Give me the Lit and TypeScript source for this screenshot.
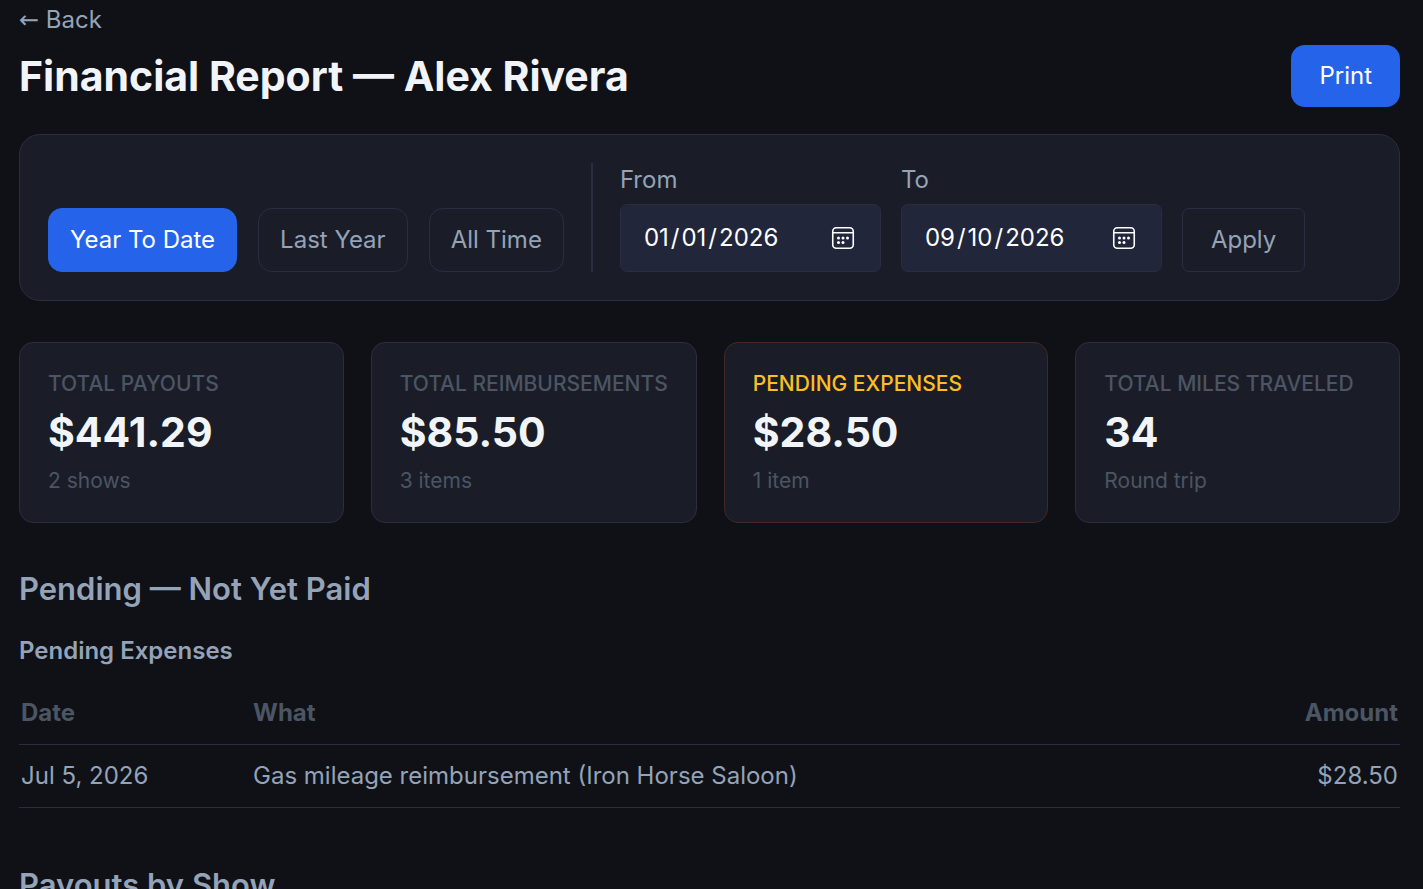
import { LitElement, html, css } from "lit";
import { customElement, property, state } from "lit/decorators.js";

interface Expense {
  date: string;
  what: string;
  amount: string;
}

@customElement("stat-card")
export class StatCard extends LitElement {
  @property() label = "";
  @property() value = "";
  @property() note = "";

  static styles = css`
    :host {
      display: block;
      box-sizing: border-box;
      padding: 28px;
      border: 1px solid #2a2d42;
      border-radius: 14px;
      background: #1a1d27;
    }
    :host([pending]) {
      border-color: #43281f;
    }
    .label,
    .note {
      margin: 0;
      font-size: 21px;
      line-height: 26px;
      color: #4b5563;
    }
    .label {
      font-weight: 500;
      text-transform: uppercase;
      white-space: nowrap;
    }
    :host([pending]) .label {
      color: #fbbf24;
    }
    .value {
      margin: 10px 0 11px;
      font-size: 41px;
      font-weight: 700;
      line-height: 50px;
      color: #f1f5f9;
    }
  `;

  render() {
    return html`
      <p class="label">${this.label}</p>
      <p class="value">${this.value}</p>
      <p class="note">${this.note}</p>
    `;
  }
}

@customElement("app-root")
export class AppRoot extends LitElement {
  @state() private range = "Year To Date";

  private ranges = ["Year To Date", "Last Year", "All Time"];

  private expenses: Expense[] = [
    { date: "Jul 5, 2026", what: "Gas mileage reimbursement (Iron Horse Saloon)", amount: "$28.50" },
  ];

  static styles = css`
    :host {
      display: block;
      box-sizing: border-box;
      min-height: 100vh;
      padding: 4px 23px 0 19px;
      background: #0f1117;
      color: #94a3b8;
      font-family: Inter, sans-serif;
      font-size: 24px;
      line-height: 32px;
    }
    button,
    input {
      box-sizing: border-box;
      margin: 0;
      font: inherit;
    }
    button {
      cursor: pointer;
    }
    .back {
      display: block;
      width: fit-content;
      height: 32px;
      color: inherit;
      text-decoration: none;
    }
    .arrow {
      font-family: "DejaVu Sans", sans-serif;
      line-height: 24px;
    }
    .head {
      display: flex;
      align-items: center;
      justify-content: space-between;
      margin: 9px 0 27px;
    }
    h1,
    h2,
    h3 {
      margin: 0;
    }
    h1 {
      font-size: 41px;
      font-weight: 700;
      line-height: 52px;
      color: #f1f5f9;
    }
    .print {
      padding: 15px 28px;
      border: 0;
      border-radius: 14px;
      background: #2563eb;
      color: #fff;
    }
    .filters {
      display: flex;
      flex-wrap: wrap;
      align-items: flex-end;
      gap: 20px;
      padding: 28px;
      border: 1px solid #2a2d42;
      border-radius: 21px;
      background: #1a1d27;
    }
    .ranges {
      display: flex;
      gap: 21px;
    }
    .range,
    .apply {
      padding: 15px 21px;
      border: 1px solid #2a2d42;
      border-radius: 14px;
      background: transparent;
      color: #94a3b8;
    }
    .range.active {
      border-color: #2563eb;
      background: #2563eb;
      color: #fff;
    }
    .apply {
      padding: 15px 28px;
      border-radius: 7px;
    }
    .divider {
      align-self: stretch;
      width: 2px;
      margin: 0 7px;
      background: #2a2d42;
    }
    .field {
      display: flex;
      flex-direction: column;
      gap: 7px;
      line-height: 34px;
    }
    .date {
      width: 261px;
      height: 68px;
      padding: 0 25px 0 22px;
      border: 1px solid #2a2d42;
      border-radius: 7px;
      background: #21263a;
      color: #fff;
      color-scheme: dark;
    }
    .date::-webkit-datetime-edit,
    .date::-webkit-datetime-edit-fields-wrapper {
      padding: 0;
    }
    .date::-webkit-datetime-edit-text {
      padding: 0 1px;
    }
    .date::-webkit-calendar-picker-indicator {
      width: 24px;
      height: 24px;
      margin: 0;
      padding: 0;
      background: url("data:image/svg+xml,%3Csvg xmlns='http://www.w3.org/2000/svg' viewBox='0 0 24 24' fill='%23fff'%3E%3Crect x='1.75' y='1.75' width='20.5' height='20.5' rx='3.5' fill='none' stroke='%23fff' stroke-width='1.6'/%3E%3Cpath d='M2 6h20v1.6H2z'/%3E%3Ccircle cx='7.5' cy='12' r='1.5'/%3E%3Ccircle cx='12' cy='12' r='1.5'/%3E%3Ccircle cx='16.5' cy='12' r='1.5'/%3E%3Ccircle cx='7.5' cy='16.5' r='1.5'/%3E%3Ccircle cx='12' cy='16.5' r='1.5'/%3E%3C/svg%3E")
        center / 24px 24px no-repeat;
    }
    .stats {
      display: grid;
      grid-template-columns: repeat(4, 1fr);
      gap: 27px;
      margin: 41px 0 46px;
    }
    h2 {
      font-size: 31px;
      font-weight: 600;
      line-height: 40px;
    }
    h3 {
      margin: 26px 0 15px;
      font-size: 24px;
      font-weight: 600;
      line-height: 32px;
    }
    table {
      width: 100%;
      margin-bottom: 57px;
      border-collapse: separate;
      border-spacing: 0;
    }
    th,
    td {
      padding: 15px 2px;
      border-bottom: 1px solid #2a2d42;
      text-align: left;
    }
    th {
      font-weight: 700;
      color: #4b5563;
    }
    .col-date {
      width: 228px;
    }
    .amount {
      text-align: right;
    }
  `;

  render() {
    return html`
      <a class="back" href="#"><span class="arrow">←</span> Back</a>
      <header class="head">
        <h1>Financial Report — Alex Rivera</h1>
        <button class="print" type="button">Print</button>
      </header>

      <form class="filters" @submit=${(e: Event) => e.preventDefault()}>
        <div class="ranges">
          ${this.ranges.map(
            (name) => html`<button
              type="button"
              class="range ${name === this.range ? "active" : ""}"
              @click=${() => (this.range = name)}
            >${name}</button>`
          )}
        </div>
        <div class="divider"></div>
        <div class="field">
          <label for="from">From</label>
          <input class="date" id="from" type="date" value="2026-01-01" />
        </div>
        <div class="field">
          <label for="to">To</label>
          <input class="date" id="to" type="date" value="2026-09-10" />
        </div>
        <button class="apply" type="submit">Apply</button>
      </form>

      <section class="stats">
        <stat-card label="Total Payouts" value="$441.29" note="2 shows"></stat-card>
        <stat-card label="Total Reimbursements" value="$85.50" note="3 items"></stat-card>
        <stat-card pending label="Pending Expenses" value="$28.50" note="1 item"></stat-card>
        <stat-card label="Total Miles Traveled" value="34" note="Round trip"></stat-card>
      </section>

      <section>
        <h2>Pending — Not Yet Paid</h2>
        <h3>Pending Expenses</h3>
        <table>
          <thead>
            <tr>
              <th class="col-date" scope="col">Date</th>
              <th scope="col">What</th>
              <th class="amount" scope="col">Amount</th>
            </tr>
          </thead>
          <tbody>
            ${this.expenses.map(
              (row) => html`<tr>
                <td>${row.date}</td>
                <td>${row.what}</td>
                <td class="amount">${row.amount}</td>
              </tr>`
            )}
          </tbody>
        </table>
      </section>

      <section>
        <h2>Payouts by Show</h2>
      </section>
    `;
  }
}
